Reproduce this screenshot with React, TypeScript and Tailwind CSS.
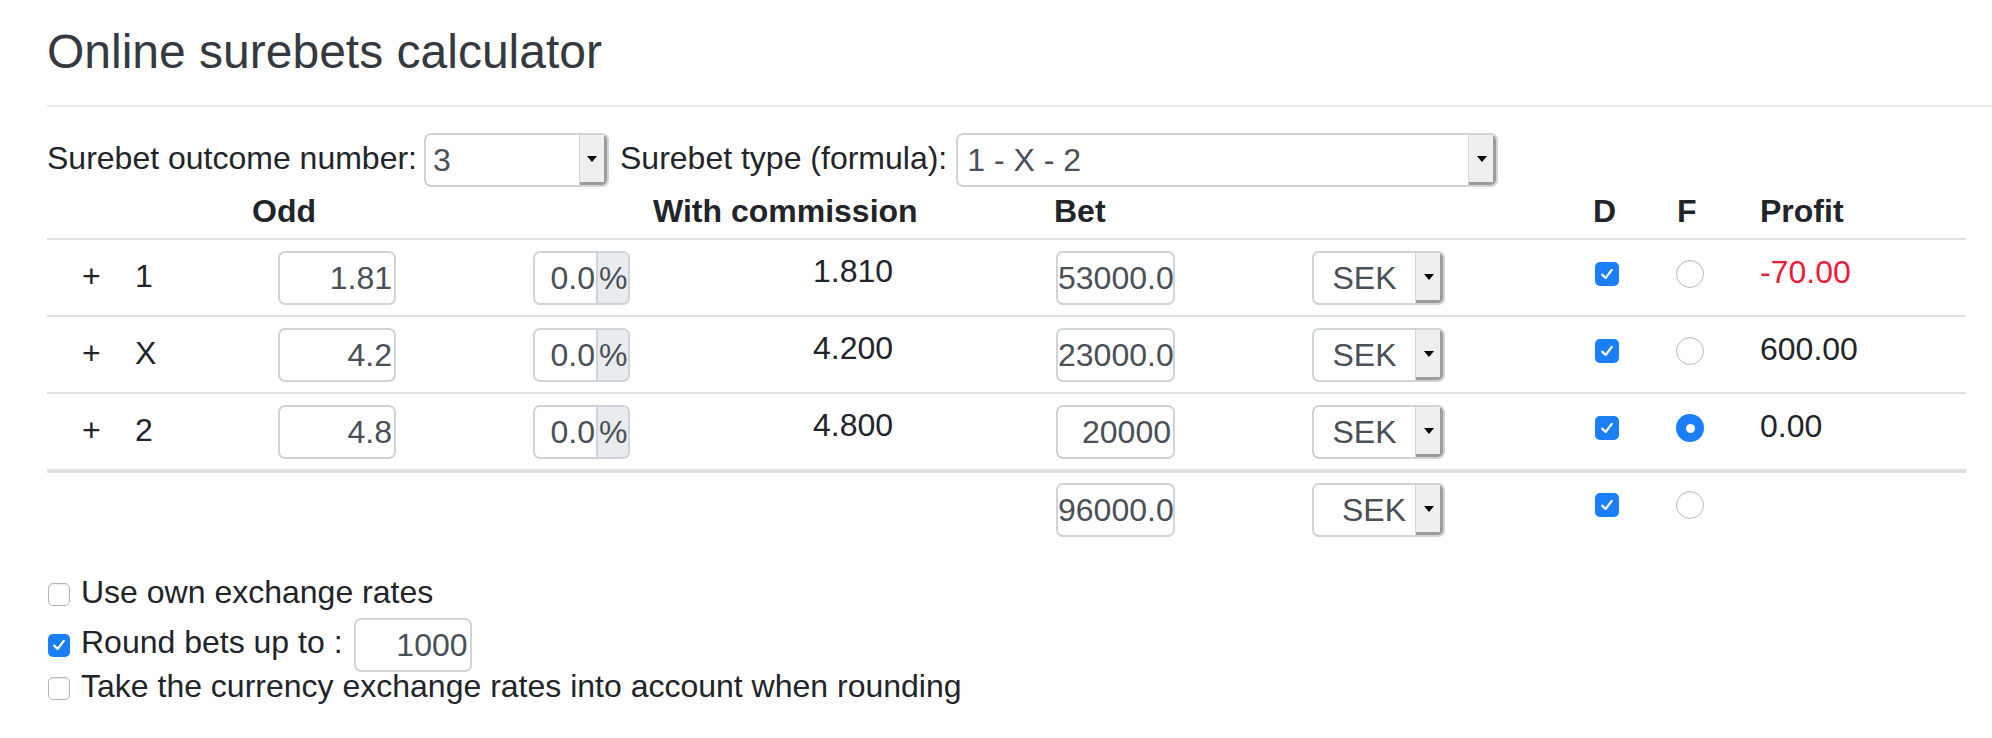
import React from 'react';

interface OutcomeRow {
  label: string;
  odd: string;
  comm: string;
  value: string;
  bet: string;
  profit: string;
  loss: boolean;
  fixed: boolean;
}

const ROWS: OutcomeRow[] = [
  { label: '1', odd: '1.81', comm: '0.0', value: '1.810', bet: '53000.0', profit: '-70.00', loss: true, fixed: false },
  { label: 'X', odd: '4.2', comm: '0.0', value: '4.200', bet: '23000.0', profit: '600.00', loss: false, fixed: false },
  { label: '2', odd: '4.8', comm: '0.0', value: '4.800', bet: '20000', profit: '0.00', loss: false, fixed: true },
];

const GRID = 'grid w-[1919px] pl-[35px] grid-cols-[53px_143px_255px_280px_243px_256px_283px_81px_84px_1fr] items-start';

function NumBox({ value, className = '' }: { value: string; className?: string }) {
  return (
    <div
      className={`h-[54px] rounded-[7px] border-2 border-[#ced4da] bg-white text-right text-[32px] leading-[50px] text-[#495057] whitespace-nowrap overflow-hidden pr-[2px] ${className}`}
    >
      {value}
    </div>
  );
}

function Select({ value, className = '', textClass = '' }: { value: string; className?: string; textClass?: string }) {
  return (
    <div className={`flex h-[54px] rounded-[7px] border-2 border-[#ced4da] bg-white overflow-hidden ${className}`}>
      <div className={`flex-1 text-[32px] leading-[50px] text-[#495057] whitespace-nowrap overflow-hidden ${textClass}`}>
        {value}
      </div>
      <div className="w-[28px] flex items-center justify-center bg-[#efefef] border-l border-[#d6d6d6] shadow-[inset_-3px_-3px_0_#9c9c9c]">
        <span className="block w-0 h-0 -mt-[2px] -ml-[2px] border-x-[5px] border-x-transparent border-t-[6px] border-t-black" />
      </div>
    </div>
  );
}

function Check({ checked, className = '', small = false }: { checked: boolean; className?: string; small?: boolean }) {
  const size = small ? 'w-[22px] h-[23px] rounded-[5px]' : 'w-[24px] h-[24px] rounded-[5px]';
  if (!checked) {
    return <div className={`${size} shrink-0 bg-white border border-[#b4b4b4] shadow-[inset_0_1px_1px_rgba(0,0,0,0.08)] ${className}`} />;
  }
  return (
    <div className={`${size} shrink-0 bg-[#1a7ff6] flex items-center justify-center ${className}`}>
      <svg width="16" height="16" viewBox="0 0 16 16" fill="none">
        <path d="M3.2 8.6 L6.6 12 L12.8 3.8" stroke="white" strokeWidth="2.2" strokeLinecap="round" strokeLinejoin="round" />
      </svg>
    </div>
  );
}

function Radio({ checked, className = '' }: { checked: boolean; className?: string }) {
  if (checked) {
    return (
      <div className={`w-[28px] h-[28px] rounded-full bg-[#1a7ff6] flex items-center justify-center ${className}`}>
        <div className="w-[9px] h-[9px] rounded-full bg-white" />
      </div>
    );
  }
  return (
    <div
      className={`w-[28px] h-[28px] rounded-full bg-white border border-[#bcbcbc] shadow-[inset_0_1px_2px_rgba(0,0,0,0.08)] ${className}`}
    />
  );
}

export default function App() {
  return (
    <div className="min-h-[738px] bg-white font-['Liberation_Sans',Arial,sans-serif] text-[#212529]">
      <h1 className="pl-[47px] pt-[23px] text-[48px] leading-[57.6px] text-[#343a40]">Online surebets calculator</h1>
      <div className="ml-[47px] mt-[24px] border-t-2 border-[#e9ecef]" />

      <div className="pl-[47px]">
        {/* outcome number + formula */}
        <div className="mt-[26px] flex items-center text-[32px]">
          <span className="mb-[4px] leading-[38px]">Surebet outcome number:</span>
          <Select value="3" className="w-[185px] ml-[7px]" textClass="pl-[7px]" />
          <span className="ml-[11px] mb-[4px] leading-[38px]">Surebet type (formula):</span>
          <Select value="1 - X - 2" className="w-[542px] ml-[9px]" textClass="pl-[9px]" />
        </div>

        {/* header */}
        <div className="grid w-[1919px] pl-[205px] grid-cols-[401px_401px_539px_84px_83px_1fr] pb-[3px] border-b-2 border-[#dee2e6] text-[32px] font-bold leading-[48px]">
          <div>Odd</div>
          <div>With commission</div>
          <div>Bet</div>
          <div>D</div>
          <div>F</div>
          <div>Profit</div>
        </div>

        {/* outcome rows */}
        {ROWS.map((r, i) => (
          <div
            key={r.label}
            className={`${GRID} pt-[11px] pb-[10px] text-[32px] ${i === ROWS.length - 1 ? 'border-b-4' : 'border-b-2'} border-[#dee2e6]`}
          >
            <div className="pt-[1px] leading-[48px]">+</div>
            <div className="pt-[1px] leading-[48px]">{r.label}</div>
            <NumBox value={r.odd} className="w-[118px]" />
            <div className="flex h-[54px] w-[97px] rounded-[7px] border-2 border-[#ced4da] bg-white overflow-hidden text-[32px] leading-[50px] text-[#495057]">
              <div className="w-[61px] text-right pr-[1px]">{r.comm}</div>
              <div className="flex-1 bg-[#e9ecef] border-l-2 border-[#ced4da] pl-[1px] overflow-hidden">%</div>
            </div>
            <div className="-mt-[4px] leading-[48px]">{r.value}</div>
            <NumBox value={r.bet} className="w-[119px]" />
            <Select value="SEK" className="w-[133px]" textClass="text-center" />
            <Check checked className="mt-[11px]" />
            <Radio checked={r.fixed} className="mt-[9.5px]" />
            <div className={`-mt-[3px] leading-[48px] ${r.loss ? 'text-[#ee1a3c]' : ''}`}>{r.profit}</div>
          </div>
        ))}

        {/* total row */}
        <div className={`${GRID} pt-[10px] pb-[10px] text-[32px]`}>
          <div />
          <div />
          <div />
          <div />
          <div />
          <NumBox value="96000.0" className="w-[119px]" />
          <Select value="SEK" className="w-[133px]" textClass="text-right pr-[9px]" />
          <Check checked className="mt-[10.5px]" />
          <Radio checked={false} className="mt-[8px]" />
          <div />
        </div>

        {/* options */}
        <div className="mt-[26px] flex flex-col text-[32px]">
          <label className="flex items-center h-[38px] gap-[11px]">
            <Check checked={false} small className="ml-[1px] mt-[5px]" />
            <span className="leading-[38px]">Use own exchange rates</span>
          </label>
          <label className="mt-[1.3px] flex items-center h-[60px] gap-[11px]">
            <Check checked small className="ml-[1px] mt-[7px]" />
            <span className="leading-[38px]">Round bets up to :</span>
            <NumBox value="1000" className="w-[118px] mt-[6px]" />
          </label>
          <label className="flex items-center h-[28px] gap-[11px]">
            <Check checked={false} small className="ml-[1px] mt-[5px]" />
            <span className="leading-[38px] whitespace-nowrap">Take the currency exchange rates into account when rounding</span>
          </label>
        </div>
      </div>
    </div>
  );
}
